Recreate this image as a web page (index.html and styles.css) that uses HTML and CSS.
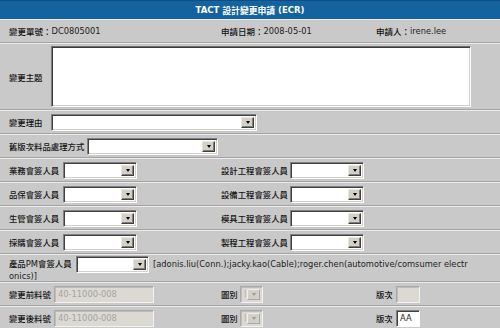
FILE: index.html
```html
<!DOCTYPE html>
<html lang="zh-Hant">
<head>
<meta charset="utf-8">
<title>TACT 設計變更申請 (ECR)</title>
<link rel="stylesheet" href="styles.css">
</head>
<body>
<div class="form">
  <div class="title">TACT <span class="tcjk">設計變更申請</span> (ECR)</div>

  <div class="row">
    <div class="c1"><span class="cj">變更單號：</span>DC0805001</div>
    <div class="c2"><span class="cj">申請日期：</span>2008-05-01</div>
    <div class="c3"><span class="cj">申請人：</span>irene.lee</div>
  </div>

  <div class="row row-subject">
    <div class="c1 full">
      <span class="lbl w42">變更主題</span>
      <textarea class="ta"></textarea>
    </div>
  </div>

  <div class="row">
    <div class="c1 full">
      <span class="lbl w42">變更理由</span>
      <span class="sel w206"><select><option></option></select><span class="btn"><i class="tri"></i></span></span>
    </div>
  </div>

  <div class="row">
    <div class="c1 full">
      <span class="lbl w78">舊版次料品處理方式</span>
      <span class="sel w131"><select><option></option></select><span class="btn"><i class="tri"></i></span></span>
    </div>
  </div>

  <div class="row">
    <div class="c1">
      <span class="lbl w54">業務會簽人員</span>
      <span class="sel w74"><select><option></option></select><span class="btn"><i class="tri"></i></span></span>
    </div>
    <div class="c2">
      <span class="lbl w69">設計工程會簽人員</span>
      <span class="sel w74"><select><option></option></select><span class="btn"><i class="tri"></i></span></span>
    </div>
  </div>

  <div class="row">
    <div class="c1">
      <span class="lbl w54">品保會簽人員</span>
      <span class="sel w74"><select><option></option></select><span class="btn"><i class="tri"></i></span></span>
    </div>
    <div class="c2">
      <span class="lbl w69">設備工程會簽人員</span>
      <span class="sel w74"><select><option></option></select><span class="btn"><i class="tri"></i></span></span>
    </div>
  </div>

  <div class="row">
    <div class="c1">
      <span class="lbl w54">生管會簽人員</span>
      <span class="sel w74"><select><option></option></select><span class="btn"><i class="tri"></i></span></span>
    </div>
    <div class="c2">
      <span class="lbl w69">模具工程會簽人員</span>
      <span class="sel w74"><select><option></option></select><span class="btn"><i class="tri"></i></span></span>
    </div>
  </div>

  <div class="row">
    <div class="c1">
      <span class="lbl w54">採購會簽人員</span>
      <span class="sel w74"><select><option></option></select><span class="btn"><i class="tri"></i></span></span>
    </div>
    <div class="c2">
      <span class="lbl w69">製程工程會簽人員</span>
      <span class="sel w74"><select><option></option></select><span class="btn"><i class="tri"></i></span></span>
    </div>
  </div>

  <div class="row row-pm">
    <div class="pm"><span class="lbl-inline w67">產品PM會簽人員</span><span class="sel w73 sel-inline"><select><option></option></select><span class="btn"><i class="tri"></i></span></span>[adonis.liu(Conn.);jacky.kao(Cable);roger.chen(automotive/comsumer electr<br>onics)]</div>
  </div>

  <div class="row">
    <div class="c1">
      <span class="lbl w45">變更前料號</span>
      <input class="inp w100" type="text" value="40-11000-008" disabled>
    </div>
    <div class="c2">
      <span class="lbl w19">圖別</span>
      <span class="sel w23 dis"><select disabled><option>E</option></select><span class="btn"><i class="tri"></i></span></span>
    </div>
    <div class="c3">
      <span class="lbl w20">版次</span>
      <input class="inp w24" type="text" value="" disabled>
    </div>
  </div>

  <div class="row">
    <div class="c1">
      <span class="lbl w45">變更後料號</span>
      <input class="inp w100" type="text" value="40-11000-008" disabled>
    </div>
    <div class="c2">
      <span class="lbl w19">圖別</span>
      <span class="sel w23 dis"><select disabled><option>E</option></select><span class="btn"><i class="tri"></i></span></span>
    </div>
    <div class="c3">
      <span class="lbl w20">版次</span>
      <input class="inp w24 on" type="text" value="AA">
    </div>
  </div>
</div>
</body>
</html>
```

FILE: styles.css
```css
* { box-sizing: border-box; }

html, body {
  margin: 0;
  padding: 0;
}

body {
  width: 500px;
  height: 328px;
  overflow: hidden;
  background: #c9c9c9;
  font-family: "DejaVu Sans", "Noto Sans CJK TC", sans-serif;
  font-size: 8.3px;
  color: #1e1e1e;
}

.title {
  height: 19px;
  background: #14639e;
  border-top: 1px solid #0d4f82;
  color: #fff;
  font-weight: bold;
  font-size: 8.5px;
  display: flex;
  align-items: center;
  justify-content: center;
  white-space: pre;
}
.tcjk { font-size: 8.8px; }

.row {
  display: flex;
  align-items: center;
  height: 24px;
  border-top: 1px solid #ebebeb;
  border-bottom: 1px solid #a4a4a4;
}

.row-subject { height: 67px; }
.row-pm { height: 28px; align-items: flex-start; }

.c1, .c2, .c3 {
  display: flex;
  align-items: center;
  padding-left: 9px;
  white-space: nowrap;
}
.c1 { width: 212px; }
.c1.full { width: 100%; }
.c2 { width: 155px; }
.c3 { flex: 1; }

.cj {
  font-size: 8.5px;
  font-weight: 500;
  color: #141414;
}

.lbl {
  flex: none;
  white-space: nowrap;
  font-size: 8.4px;
  font-weight: 500;
  color: #141414;
}
.w19 { width: 19px; }
.w20 { width: 20px; }
.w42 { width: 42px; }
.w45 { width: 45px; }
.w54 { width: 54px; }
.w67 { width: 67px; }
.w69 { width: 69px; }
.w78 { width: 78px; }

/* textarea */
.ta {
  width: 420px;
  height: 61px;
  resize: none;
  margin: 0;
  padding: 2px;
  background: #fff;
  border: 1px solid;
  border-color: #6e6e6e #fff #fff #7c7c7c;
  box-shadow: inset 1px 1px 0 #3a3a3a, inset -1px -1px 0 #d4d0c8;
  font: inherit;
  outline: none;
}

/* select */
.sel {
  display: inline-flex;
  flex: none;
  height: 17px;
  padding: 2px;
  background: #fff;
  border: 1px solid;
  border-color: #808080 #fff #fff #808080;
  box-shadow: inset 1px 1px 0 #404040, inset -1px -1px 0 #d4d0c8;
}
.sel select {
  flex: 1;
  min-width: 0;
  height: 100%;
  margin: 0;
  padding: 0 1px;
  border: 0;
  background: transparent;
  font: inherit;
  color: #1e1e1e;
  -webkit-appearance: none;
  appearance: none;
  outline: none;
}
.sel .btn {
  flex: none;
  width: 13px;
  height: 100%;
  display: flex;
  align-items: center;
  justify-content: center;
  background: #d4d0c8;
  border: 1px solid;
  border-color: #e8e6e1 #404040 #404040 #e8e6e1;
  box-shadow: inset -1px -1px 0 #808080;
}
.tri {
  display: block;
  width: 0;
  height: 0;
  border-left: 2.5px solid transparent;
  border-right: 2.5px solid transparent;
  border-top: 3px solid #000;
}

.sel.dis {
  background: #dcd9d3;
  border-color: #a8a8a8 #f2f2f2 #f2f2f2 #a8a8a8;
  box-shadow: inset 1px 1px 0 #bdbdbd;
}
.sel.dis select { color: #a3a3a3; }
.sel.dis .btn {
  border-color: #eeeeea #a8a8a8 #a8a8a8 #eeeeea;
  box-shadow: none;
}
.sel.dis .tri { border-top-color: #9a9a9a; }

.w206 { width: 206px; }
.w131 { width: 131px; }
.w74 { width: 74px; }
.w73 { width: 73px; }
.w23 { width: 23px; }

/* inputs */
.inp {
  flex: none;
  height: 17px;
  margin: 0;
  padding: 0 3px;
  font: inherit;
  color: #a3a3a3;
  background: #dcd9d3;
  border: 1px solid;
  border-color: #a8a8a8 #f2f2f2 #f2f2f2 #a8a8a8;
  box-shadow: inset 1px 1px 0 #bdbdbd;
  outline: none;
}
.inp.on {
  color: #1e1e1e;
  background: #fff;
  border-color: #808080 #fff #fff #808080;
  box-shadow: inset 1px 1px 0 #404040;
}
.w100 { width: 100px; }
.w24 { width: 24px; }

/* PM row */
.pm {
  padding: 3px 0 0 9px;
  line-height: 12px;
  white-space: nowrap;
}
.lbl-inline {
  display: inline-block;
  font-size: 8.4px;
  font-weight: 500;
  color: #141414;
}
.sel-inline {
  vertical-align: top;
  margin: -2px 4px -3px 0;
}
```
